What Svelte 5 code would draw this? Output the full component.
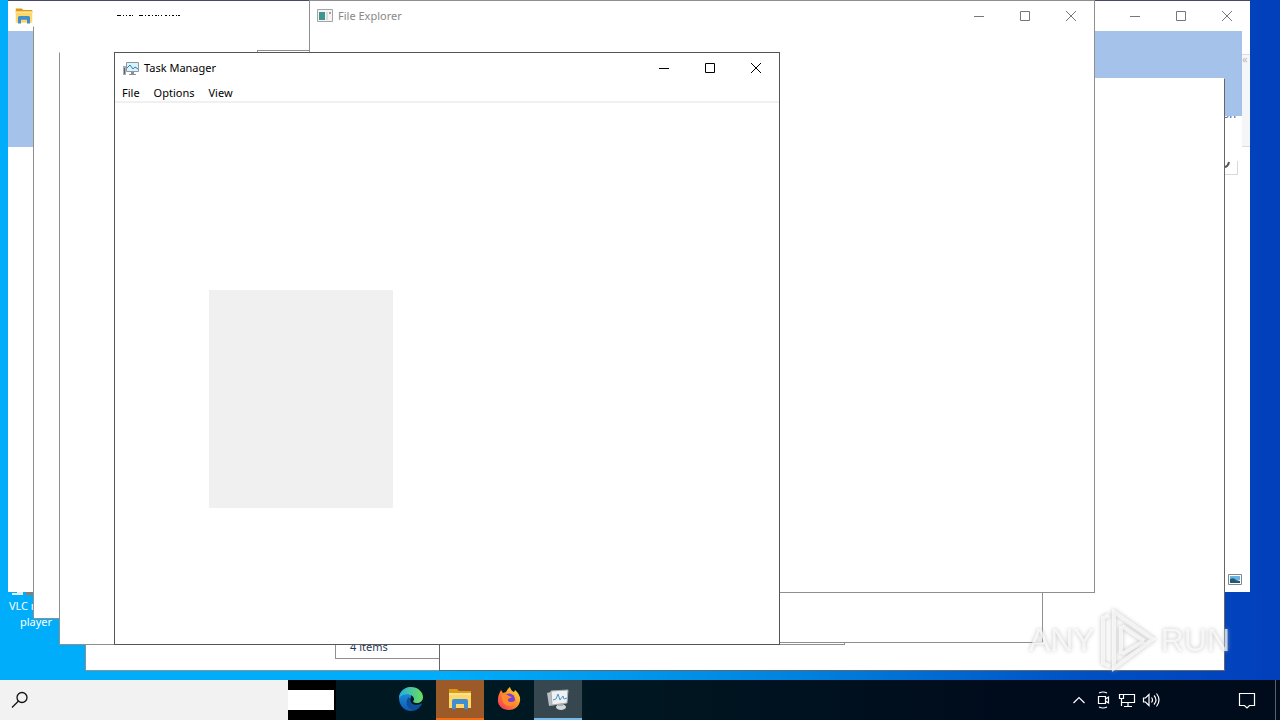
<script lang="ts">
    type Win = { id: string; x: number; y: number; width: number; height: number };

    /** Plain windows, from back to front. */
    const blankWindows: Win[] = [
        { id: "base", x: 85, y: 78, width: 786, height: 593 },
        { id: "items", x: 335, y: 66, width: 500, height: 593 },
        { id: "right", x: 439, y: 78, width: 786, height: 593 },
        { id: "left", x: 33, y: 26, width: 786, height: 593 },
        { id: "middle", x: 59, y: 52, width: 786, height: 593 },
        { id: "upper", x: 257, y: 50, width: 786, height: 593 },
    ];

    const menus = ["File", "Options", "View"];

    function place(w: Omit<Win, "id">) {
        return `left:${w.x}px;top:${w.y}px;width:${w.width}px;height:${w.height}px`;
    }
</script>

{#snippet controls()}
    <div class="controls">
        <button aria-label="Minimize">
            <svg width="12" height="12" viewBox="0 0 12 12"><path d="M1 6.500h10" /></svg>
        </button>
        <button aria-label="Maximize">
            <svg width="12" height="12" viewBox="0 0 12 12"><path d="M1.500 1.500h9v9h-9z" /></svg>
        </button>
        <button aria-label="Close">
            <svg width="12" height="12" viewBox="0 0 12 12"><path d="M1 1l10 10M11 1L1 11" /></svg>
        </button>
    </div>
{/snippet}

{#snippet folder(size: number)}
    <svg width={size} height={size} viewBox="0 0 24 24">
        <path d="M1 2h8l2 2h12v4H1z" fill="#dc9a16" />
        <path d="M1 6h22v15H1z" fill="#ffd768" />
        <path d="M1 6h22v2H1z" fill="#ffe392" />
        <path d="M4 22v-8q0-2 2-2h12q2 0 2 2v8h-4v-5H8v5z" fill="#3e8ed0" />
    </svg>
{/snippet}

<main class="desktop">
    <div class="shortcut">
        <svg width="22" height="6" viewBox="0 0 22 6"><path d="M0 5V3h5V0h6v5z" fill="#e8edf0" /><path d="M14 2h6l2 3h-8z" fill="#8b7d73" /></svg>
        VLC media<br />player
    </div>

    <section class="window explorer" style={place({ x: 8, y: 0, width: 1242, height: 592 })}>
        <header>
            {@render folder(18)}
            {@render controls()}
        </header>
        <span class="selection">Selection</span>
        <div class="band"></div>
        <div class="strip"></div>
        <div class="ribbon">«</div>
        <div class="address">
            <svg width="7" height="7" viewBox="0 0 7 7"><path d="M0 6q4 0 5-5" fill="none" stroke="#555" stroke-width="2" /></svg>
        </div>
        <svg class="thumbs" width="14" height="11" viewBox="0 0 14 11">
            <path d="M.5.5h13v10H.5z" fill="#fff" stroke="#7a8794" />
            <path d="M2 2h10v4H2z" fill="#69b2e8" />
            <path d="M2 5q4-2 6 1l4 1v2H2z" fill="#245a70" />
        </svg>
    </section>

    {#each blankWindows as w (w.id)}
        <section class="window {w.id}" style={place(w)}>
            {#if w.id === "items"}
                <span class="count">4 items</span>
            {/if}
        </section>
    {/each}

    <!-- repaint leftovers of a hidden title bar -->
    <div class="leftover">
        <svg width="64" height="3" viewBox="0 0 64 3">
            <path d="M1 2.500h4m2 0h1m2 0h1m2 0h2m1 0h1m6 0h4m2 0h1m2 0h2m2 0h1m2 0h2m1 0h1m2 0h1m3 0h2m2 0h1m2 0h2m2 0h1m1 0h2" stroke="#000" />
        </svg>
    </div>

    <section class="window inactive" style={place({ x: 309, y: 0, width: 786, height: 593 })}>
        <header>
            <svg width="16" height="14" viewBox="0 0 16 14">
                <path d="M.5.5h15v12H.5z" fill="#f4f4f4" stroke="#a3a3a3" />
                <path d="M2 3h6v8H2z" fill="#3f9490" />
                <path d="M9 3h2v8H9z" fill="#dcdcdc" />
                <path d="M12 3h2v2h-2z" fill="#a3a3a3" />
            </svg>
            <h2>File Explorer</h2>
            {@render controls()}
        </header>
    </section>

    <section class="window task" style={place({ x: 114, y: 52, width: 666, height: 593 })}>
        <header>
            <svg width="17" height="16" viewBox="0 0 17 16">
                <path d="M1 6h3v9H1z" fill="#a7adb2" />
                <path d="M2.500 8v6" stroke="#58636b" />
                <path d="M4.500 2.500h12v9h-12z" fill="#d8f1fc" stroke="#8e999f" />
                <path d="M5 8l3-3 3 4 2-2 3 2" fill="none" stroke="#2684b5" />
                <path d="M9 12h3v2h2v1H7v-1h2z" fill="#84909a" />
            </svg>
            <h1>Task Manager</h1>
            {@render controls()}
        </header>
        <nav>
            {#each menus as menu}
                <button>{menu}</button>
            {/each}
        </nav>
        <div class="placeholder"></div>
    </section>

    <div class="watermark">
        <span>ANY</span>
        <svg width="58" height="64" viewBox="0 0 58 64">
            <path d="M10 7L4 10v45l7 3M15 4l39 27-39 29zM22 18v28M23 18l22 15M23 46l22-13" />
        </svg>
        <span>RUN</span>
    </div>

    <footer class="taskbar">
        <label class="search">
            <svg width="18" height="18" viewBox="0 0 18 18"><circle cx="11" cy="6.500" r="5" /><path d="M7.500 10L1 16.500" /></svg>
            <input aria-label="Search" />
        </label>
        <div class="gap"><div></div></div>
        <div class="apps">
            <button aria-label="Edge">
                <svg width="24" height="24" viewBox="0 0 24 24">
                    <defs>
                        <linearGradient id="edge-top"><stop stop-color="#2aaae0" /><stop offset="1" stop-color="#6ae05b" /></linearGradient>
                        <linearGradient id="edge-low" x2="0" y2="1"><stop stop-color="#1aa0e4" /><stop offset="1" stop-color="#1258b4" /></linearGradient>
                    </defs>
                    <path d="M0 11C0 5 5 0 12 0v10c-2 4 0 8 5 8 3 0 5-1 6-2-2 5-6 8-11 8C5 24 0 18 0 11z" fill="url(#edge-low)" />
                    <path d="M0 11C1 4 6 0 12 0c7 0 12 5 12 10 0 4-3 6-6 6-3 0-5-1-3-3 1-5-9-9-15-2z" fill="url(#edge-top)" />
                    <path d="M10 10c-5 4-2 13 5 13 3 0 6-3 8-6-5 3-12 1-12-5z" fill="#0d4f9b" />
                </svg>
            </button>
            <button class="files" aria-label="File Explorer">{@render folder(24)}</button>
            <button aria-label="Firefox">
                <svg width="24" height="24" viewBox="0 0 24 24">
                    <defs>
                        <linearGradient id="fox" x1="1" x2="0" y2="1"><stop stop-color="#fff044" /><stop offset=".45" stop-color="#ff9127" /><stop offset="1" stop-color="#f42b62" /></linearGradient>
                    </defs>
                    <path d="M3 5l1-2 2 3 3-1q1-3 4-5 1 4 4 5l1-2q6 5 5 11c-1 6-6 9-11 9C5 23 0 18 1 12c0-3 1-5 2-7z" fill="url(#fox)" />
                    <circle cx="12" cy="12.500" r="6" fill="#7940d8" />
                    <path d="M5 8q4-2 7 1l3 1-4 2q-1 3 3 3 3 0 5-2-1 6-7 6-6-1-7-7z" fill="#ff8c28" />
                </svg>
            </button>
            <button class="manager" aria-label="Task Manager">
                <svg width="26" height="24" viewBox="0 0 26 24">
                    <path d="M2 6l7-2 1 14-6 1z" fill="#b9bec1" />
                    <path d="M6 4l17-1-1 13-15 2z" fill="#edf1f3" stroke="#a6aeb3" />
                    <path d="M8 13l3-1 2-5 2 6 3-4 1 3 3-1" fill="none" stroke="#5693bd" />
                    <ellipse cx="16" cy="20" rx="5" ry="3" fill="#d4d8da" />
                    <path d="M13 17h5v2h-5z" fill="#a6aeb3" />
                </svg>
            </button>
        </div>
        <div class="tray">
            <button aria-label="Show hidden icons"><svg width="14" height="16" viewBox="0 0 14 16"><path d="M1.500 11L7 5.500 12.500 11" /></svg></button>
            <button aria-label="Meet Now"><svg width="14" height="18" viewBox="0 0 14 18"><path d="M3 2q4-2 8 0M3 16q4 2 8 0M2.500 5.500h7v7h-7zM9.500 8l3-2v6l-3-2" /></svg></button>
            <button aria-label="Network"><svg width="18" height="16" viewBox="0 0 18 16"><path d="M6 2.500h10.500v8H3.500V7M1.500 2.500h4v4h-4zM10 11v3M6 14.500h8M3.500 7v7" /></svg></button>
            <button aria-label="Volume"><svg width="18" height="16" viewBox="0 0 18 16"><path d="M1.500 6h2L7 2.500v11L3.500 10h-2zM9.500 5.500q2 2.500 0 5M12 3.500q4 4.500 0 9M14.500 1.500q5 6.500 0 13" /></svg></button>
            <button class="notice" aria-label="Notifications"><svg width="18" height="18" viewBox="0 0 18 18"><path d="M1.500 2.500h15v12h-5L9 17l-2.500-2.500h-5z" /></svg></button>
            <button class="peek" aria-label="Show desktop"></button>
        </div>
    </footer>
</main>

<style>
    :global(body) {
        margin: 0;
    }

    .desktop {
        position: relative;
        display: flex;
        flex-direction: column;
        height: 100vh;
        overflow: hidden;
        background: linear-gradient(90deg, #00adfa 0%, #00adfa 35%, #0083e0 62%, #0050c4 85%, #023fba 100%);
        font: 11px/16px "Noto Sans", "Open Sans", sans-serif;
        color: #000;
    }

    button {
        display: flex;
        align-items: center;
        justify-content: center;
        padding: 0;
        border: none;
        background: none;
        color: inherit;
        font: inherit;
    }

    svg {
        display: block;
        flex: none;
    }

    .shortcut {
        position: absolute;
        left: 0;
        top: 590px;
        width: 72px;
        color: #fff;
        text-align: center;
    }

    .shortcut svg {
        margin: 0 0 2px 12px;
    }

    .window {
        position: absolute;
        box-sizing: border-box;
        border: 1px solid #8f8f8f;
        background: #fff;
    }

    .left,
    .middle {
        border-top-color: #fff;
    }

    .right {
        border-color: #fff #666 #666;
    }

    .window header {
        display: flex;
        align-items: center;
        height: 30px;
        padding-left: 7px;
    }

    .window h1,
    .window h2 {
        margin: 0 0 0 5px;
        font-size: 11px;
        font-weight: 400;
    }

    .controls {
        display: flex;
        margin-left: auto;
        color: #000;
    }

    .controls button {
        width: 46px;
        height: 28px;
    }

    .controls svg {
        fill: none;
        stroke: currentColor;
    }

    .explorer {
        border-width: 1px 0 0;
        border-color: #444a66;
    }

    .explorer .controls,
    .inactive .controls {
        color: #777;
    }

    .inactive h2 {
        color: #888;
    }

    .band {
        position: relative;
        height: 85px;
        margin-right: 8px;
        background: #a4c2ea;
    }

    .strip {
        width: 26px;
        height: 31px;
        background: #a4c2ea;
    }

    .ribbon {
        position: absolute;
        right: 0;
        top: 53px;
        box-sizing: border-box;
        width: 8px;
        height: 93px;
        border: solid #dcdcdc;
        border-width: 1px 0;
        background: #f5f6f7;
        color: #bbb;
        line-height: 8px;
    }

    /* group label, mostly under the band */
    .selection {
        position: absolute;
        right: 14px;
        top: 105px;
        color: #2a579a;
    }

    .address {
        position: absolute;
        right: 12px;
        top: 160px;
        width: 13px;
        height: 13px;
        border: solid #d9d9d9;
        border-width: 0 1px 1px 0;
    }

    .thumbs {
        position: absolute;
        right: 8px;
        bottom: 7px;
    }

    .count {
        position: absolute;
        left: 14px;
        bottom: 3px;
        color: #1e395b;
    }

    .leftover {
        position: absolute;
        left: 34px;
        top: 1px;
        display: flex;
        align-items: flex-end;
        box-sizing: border-box;
        width: 275px;
        height: 26px;
        padding: 0 0 11px 82px;
        background: #fff;
    }

    .window.task {
        border-color: #555;
    }

    nav {
        display: flex;
        align-items: flex-end;
        gap: 14px;
        height: 18px;
        padding: 0 7px;
        border-bottom: 2px solid #f0f0f0;
    }

    .placeholder {
        width: 184px;
        height: 218px;
        margin: 187px 0 0 94px;
        background: #f0f0f0;
    }

    .watermark {
        position: absolute;
        right: 50px;
        bottom: 48px;
        display: flex;
        align-items: center;
        gap: 4px;
        color: rgb(255 255 255 / 70%);
        font: 32px/64px "Liberation Sans", sans-serif;
        filter: drop-shadow(0 0 2px #aaa);
    }

    .watermark svg {
        fill: none;
        stroke: currentColor;
        stroke-width: 4;
    }

    .taskbar {
        position: relative;
        display: flex;
        height: 40px;
        margin-top: auto;
        background: linear-gradient(90deg, #001822 45%, #000b1c 80%);
        color: #fff;
    }

    .search {
        display: flex;
        align-items: center;
        box-sizing: border-box;
        width: 288px;
        padding-left: 11px;
        background: #f2f2f2;
    }

    .search svg {
        fill: none;
        stroke: #111;
        stroke-width: 1.3;
    }

    .search input {
        flex: 1;
        min-width: 0;
        border: none;
        background: none;
        outline: none;
    }

    .gap {
        width: 48px;
        background: #000;
    }

    .gap div {
        height: 20px;
        margin: 10px 2px 0 0;
        background: #fff;
    }

    .apps {
        display: flex;
        gap: 1px;
        margin-left: 51px;
    }

    .apps button {
        box-sizing: border-box;
        width: 48px;
        border-bottom: 2px solid transparent;
    }

    .apps .files {
        border-color: #f76b0c;
        background: #9b5a27;
    }

    .apps .manager {
        border-color: #76b9ed;
        background: #37474f;
    }

    .tray {
        display: flex;
        margin-left: auto;
    }

    .tray button {
        width: 24px;
    }

    .tray svg {
        fill: none;
        stroke: #fff;
        stroke-width: 1.2;
    }

    .tray .notice {
        width: 48px;
        margin-left: 60px;
    }

    .tray .peek {
        width: 5px;
        margin-left: 4px;
        border-left: 1px solid #59616a;
    }
</style>
